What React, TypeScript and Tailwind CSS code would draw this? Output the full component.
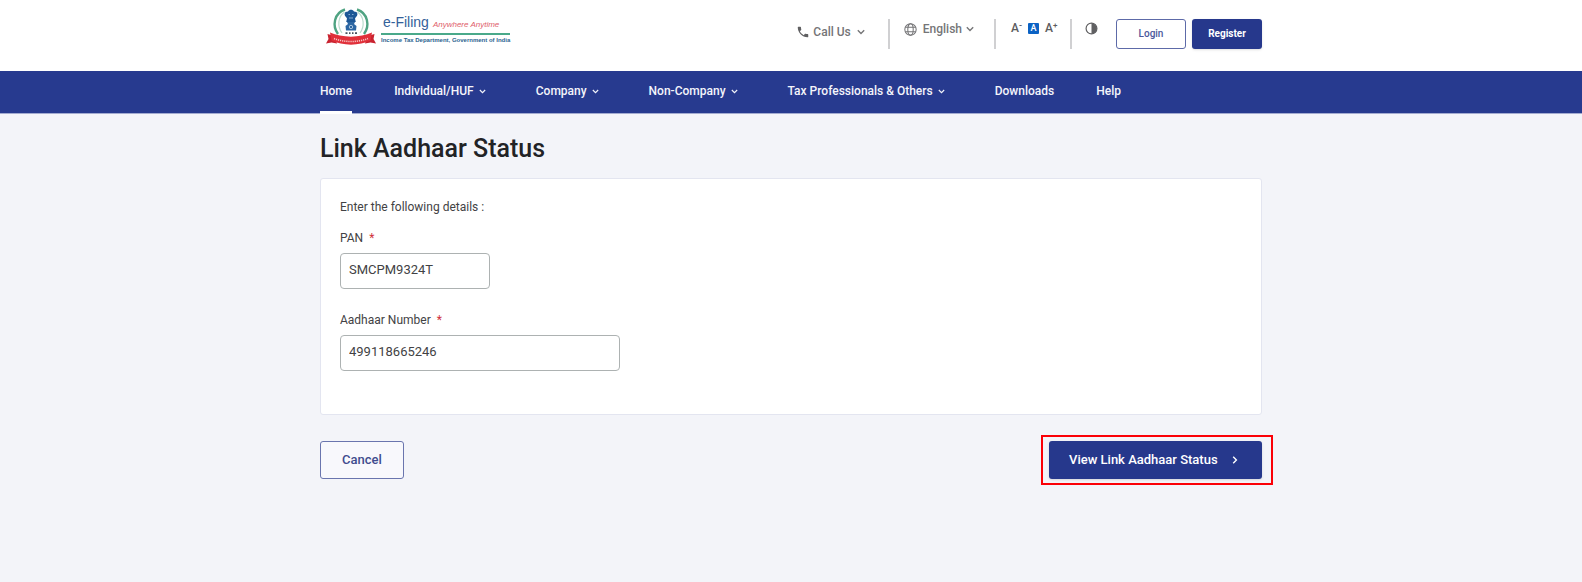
import React, { useState } from 'react';

interface NavItem {
  label: string;
  menu?: boolean;
  active?: boolean;
}

const NAV_ITEMS: NavItem[] = [
  { label: 'Home', active: true },
  { label: 'Individual/HUF', menu: true },
  { label: 'Company', menu: true },
  { label: 'Non-Company', menu: true },
  { label: 'Tax Professionals & Others', menu: true },
  { label: 'Downloads' },
  { label: 'Help' },
];

const Chevron: React.FC<{ className?: string }> = ({ className }) => (
  <svg className={className} viewBox="0 0 8 6" fill="none" stroke="currentColor" strokeWidth="1.4" aria-hidden="true">
    <path d="M0.8 1.2 4 4.4 7.2 1.2" />
  </svg>
);

const Divider = () => <div className="h-[30px] w-[2px] bg-[#d0d0d2]" />;

// National emblem with the laurel wreath and the red ribbon
const Emblem = () => (
  <svg className="h-[38px] w-[52px]" viewBox="0 0 52 38" aria-hidden="true">
    <path d="M20 1.5C9 5 7 18 13 26" fill="none" stroke="#4fa382" strokeWidth="2.4" />
    <path d="M32 1.5C43 5 45 18 39 26" fill="none" stroke="#4fa382" strokeWidth="2.4" />
    <path d="M19.5 4C13 8.500 12 18 17 25M32.500 4C39 8.500 40 18 35 25" fill="none" stroke="#b9dccd" strokeWidth="1.2" />
    <path d="M23 3.5c1-2.500 5-2.500 6 0l2.500.5c1.500 1.500 1 4-.5 5l-1 1.500.8 3.500H21.200l.8-3.500-1-1.500c-1.500-1-2-3.500-.5-5z" fill="#1d5796" />
    <path d="M23.500 6.500h1.500M27 6.500h1.500M24 10h4" stroke="#8fb3d6" strokeWidth="0.9" />
    <path d="M22 14h8l-1 2 2.500 2-.5 4.500H21l-.5-4.500 2.500-2z" fill="#2c66a3" />
    <circle cx="26" cy="19" r="1.700" fill="none" stroke="#c7daec" strokeWidth="0.800" />
    <path d="M20.500 25.200h2M24 25.200h1.500M27 25.200h1.500M30 25.200h2" stroke="#46505c" strokeWidth="1.800" />
    <path d="M1 35.500 3.500 31 2.500 26l7 2 2.500 7.500-5.500-1z" fill="#c92330" />
    <path d="M51 35.500 48.500 31l1-5-7 2-2.500 7.500 5.500-1z" fill="#c92330" />
    <path d="M5 24.500c12 5.500 30 5.500 42 0l-1.500 8c-11 5.500-28 5.500-39 0z" fill="#e0303a" />
    <path d="M9 30.500c10 4 24 4 34 0" fill="none" stroke="#f8c6c6" strokeWidth="1.600" strokeDasharray="1.200 0.900" />
  </svg>
);

const Logo = () => (
  <a href="#" className="flex items-start gap-1 pl-[5px] pt-2">
    <Emblem />
    <span className="block font-['Liberation_Sans',sans-serif]">
      <span className="mt-[6px] flex items-baseline gap-1 border-b-2 border-[#4aa98a] pl-[2px] leading-[16px]">
        <span className="text-[14px] text-[#33619a]">e-Filing</span>
        <span className="text-[8px] italic text-[#e0606a]">Anywhere Anytime</span>
      </span>
      <span className="block whitespace-nowrap text-[6px] font-bold leading-[10px] text-[#2c6390]">
        Income Tax Department, Government of India
      </span>
    </span>
  </a>
);

const TopBar = () => (
  <div className="bg-white">
    <div className="mx-auto flex h-[71px] max-w-[942px] items-start justify-between">
      <Logo />
      <div className="flex pt-[19px] text-[12px] font-medium leading-[18px] text-[#757577]">
        <button type="button" className="mr-[23px] flex h-[26px] items-center">
          <svg className="mr-[3px] size-[14px] text-[#606062]" viewBox="0 0 24 24" fill="currentColor" aria-hidden="true">
            <path d="M6.62 10.79c1.44 2.83 3.76 5.14 6.59 6.59l2.2-2.2c.27-.27.67-.36 1.02-.24 1.12.37 2.33.57 3.57.57.55 0 1 .45 1 1V20c0 .55-.45 1-1 1-9.39 0-17-7.61-17-17 0-.55.45-1 1-1h3.5c.55 0 1 .45 1 1 0 1.25.2 2.45.57 3.57.11.35.03.74-.25 1.02l-2.2 2.2z" />
          </svg>
          Call Us
          <Chevron className="ml-[6px] h-[6px] w-2" />
        </button>
        <Divider />
        <button type="button" className="ml-[14px] mr-5 flex h-5 items-center">
          <svg className="mr-[6px] size-[13px]" viewBox="0 0 24 24" fill="none" stroke="currentColor" strokeWidth="1.9" aria-hidden="true">
            <circle cx="12" cy="12" r="10.5" />
            <ellipse cx="12" cy="12" rx="5" ry="10.5" />
            <path d="M2.5 8h19M2.5 16h19" />
          </svg>
          English
          <Chevron className="ml-1 h-[6px] w-2" />
        </button>
        <Divider />
        <div className="ml-[15px] mr-[13px] flex h-[18px] items-center gap-[5px] text-[#5c5c5e]">
          <button type="button" aria-label="Decrease text size" className="flex w-3 items-start leading-[12px]">
            A<sup className="top-0 text-[9px] leading-[6px]">-</sup>
          </button>
          <button type="button" aria-label="Default text size" className="flex h-[11px] w-[11px] items-center justify-center rounded-[1px] bg-[#0b62c4] text-[9px] leading-[11px] text-white">
            A
          </button>
          <button type="button" aria-label="Increase text size" className="ml-[1px] flex w-3 items-start leading-[12px]">
            A<sup className="top-0 text-[8px] leading-[7px]">+</sup>
          </button>
        </div>
        <Divider />
        <button type="button" aria-label="Contrast" className="ml-[13px] mr-[18px] flex h-[18px] items-center text-[#606062]">
          <svg className="size-[13px]" viewBox="0 0 24 24" aria-hidden="true">
            <circle cx="12" cy="12" r="10" fill="none" stroke="currentColor" strokeWidth="2.2" />
            <path d="M12 2a10 10 0 0 1 0 20z" fill="currentColor" />
          </svg>
        </button>
        <button type="button" className="mr-[6px] h-[30px] w-[70px] rounded-[3px] border border-[#5d6aa8] text-[10px] text-[#4a579c]">
          Login
        </button>
        <button type="button" className="h-[30px] w-[70px] rounded-[3px] bg-[#26388c] text-[10px] font-bold text-white shadow-sm">
          Register
        </button>
      </div>
    </div>
  </div>
);

const MainNav = () => (
  <nav className="border-b border-[#a3abd0] bg-[#273a8f]">
    <ul className="mx-auto flex h-[42px] max-w-[942px] gap-[42px] text-[12px] font-medium text-[#f4f5fb]">
      {NAV_ITEMS.map((item) => (
        <li key={item.label} className={item.menu ? 'pr-2' : ''}>
          <a
            href="#"
            className={
              item.active
                ? 'flex h-[43px] items-center whitespace-nowrap border-b-[3px] border-white'
                : 'flex h-10 items-center whitespace-nowrap'
            }
          >
            {item.label}
            {item.menu && <Chevron className="ml-[5px] h-[5px] w-[7px]" />}
          </a>
        </li>
      ))}
    </ul>
  </nav>
);

interface FieldProps {
  id: string;
  label: string;
  value: string;
  onChange: (value: string) => void;
  className: string;
}

const Field: React.FC<FieldProps> = ({ id, label, value, onChange, className }) => (
  <div>
    <label htmlFor={id} className="block text-[12px] leading-[18px] text-[#424244]">
      {label} <span className="ml-[3px] text-[#d0323c]">*</span>
    </label>
    <input
      id={id}
      type="text"
      value={value}
      onChange={(e) => onChange(e.target.value)}
      className={`mt-[6px] block h-9 rounded-[4px] border border-[#adb2b2] bg-white px-2 pb-1 text-[13px] text-[#424244] outline-none ${className}`}
    />
  </div>
);

const App: React.FC = () => {
  const [pan, setPan] = useState('SMCPM9324T');
  const [aadhaar, setAadhaar] = useState('499118665246');

  return (
    <div className="min-h-screen bg-[#f3f4f9] font-['Roboto',sans-serif]">
      <header>
        <TopBar />
        <MainNav />
      </header>

      <main className="mx-auto max-w-[942px] pb-10">
        <h1 className="pt-[18px] text-[25px] font-medium leading-[34px] text-[#222326]">Link Aadhaar Status</h1>

        <form onSubmit={(e) => e.preventDefault()}>
          <section className="mt-3 rounded-[3px] border border-[#e3e5f0] bg-white px-[19px] pb-[43px] pt-[19px]">
            <p className="mb-[13px] text-[12px] leading-[18px] text-[#424244]">Enter the following details :</p>
            <div className="flex flex-col gap-[22px]">
              <Field id="pan" label="PAN" value={pan} onChange={setPan} className="w-[150px]" />
              <Field id="aadhaar" label="Aadhaar Number" value={aadhaar} onChange={setAadhaar} className="w-[280px]" />
            </div>
          </section>

          <div className="mt-[26px] flex items-start justify-between text-[13px] font-medium">
            <button type="button" className="h-[38px] w-[84px] rounded-[3px] border border-[#6a75ae] bg-[#f8f8fc] text-[#3f4c8e]">
              Cancel
            </button>
            {/* Red frame hangs outside the content column */}
            <div className="-mr-[11px] -mt-[6px] border-2 border-[#fb0007] py-1 pl-[6px] pr-[9px]">
              <button type="submit" className="flex h-[38px] w-[213px] items-center gap-[14px] rounded-[3px] bg-[#26388c] pl-5 text-white shadow-sm">
                View Link Aadhaar Status
                <svg className="h-2 w-[6px]" viewBox="0 0 6 8" fill="none" stroke="currentColor" strokeWidth="1.4" aria-hidden="true">
                  <path d="M1.2 0.8 4.4 4 1.2 7.2" />
                </svg>
              </button>
            </div>
          </div>
        </form>
      </main>
    </div>
  );
};

export default App;
